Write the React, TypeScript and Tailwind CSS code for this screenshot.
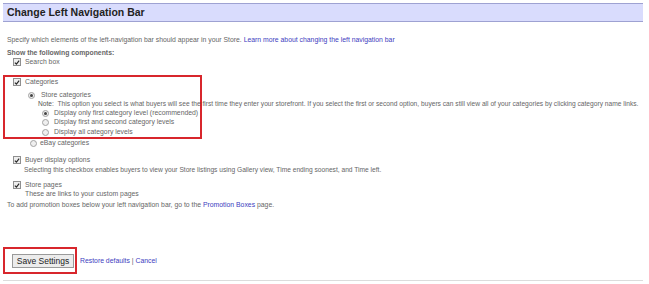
import React from 'react';

const font = { fontFamily: '"Liberation Sans", Arial, sans-serif' };

function Checkbox() {
  return (
    <span className="inline-flex items-center justify-center w-[8px] h-[8px] border border-[#8f8f8f] bg-[#eeeeee] shrink-0">
      <svg width="7" height="7" viewBox="0 0 7 7">
        <path d="M1 3.6 L2.8 5.4 L6 1.2" fill="none" stroke="#2b2b2b" strokeWidth="1.4" />
      </svg>
    </span>
  );
}

function Radio({ checked }: { checked?: boolean }) {
  return (
    <span className="inline-flex items-center justify-center w-[7px] h-[7px] rounded-full border border-[#a3a3a3] bg-[#efefef] shrink-0">
      {checked && <span className="w-[3px] h-[3px] rounded-full bg-[#444]" />}
    </span>
  );
}

function Row({ className, small, children }: { className?: string; small?: boolean; children: React.ReactNode }) {
  const size = small ? 'text-[6.65px]' : 'text-[6.85px]';
  return (
    <div className={`flex items-center h-[8px] leading-[8px] whitespace-nowrap ${size} text-[#666] ${className ?? ''}`}>
      {children}
    </div>
  );
}

export default function App() {
  return (
    <div className="w-[649px] h-[284px] bg-white pt-[3px] pl-[3px] overflow-hidden" style={font}>
      <div className="w-[640px] h-[19px] border-y border-[#9ea2d2] bg-[#d9dcfd] flex items-center pl-[4px]">
        <span className="text-[10.5px] font-bold text-[#222]">Change Left Navigation Bar</span>
      </div>

      <div className="flex flex-col">
        <Row className="mt-[14px] ml-[4px]">
          Specify which elements of the left-navigation bar should appear in your Store.&nbsp;
          <span className="text-[#4040c0]">Learn more about changing the left navigation bar</span>
        </Row>
        <Row className="mt-[5px] ml-[4px] font-bold text-[#333]">Show the following components:</Row>
        <Row className="mt-[1px] ml-[10px] gap-[4px]">
          <Checkbox />
          <span>Search box</span>
        </Row>

        <div className="mt-[9px] w-[199px] h-[64px] border-2 border-[#d8262c] flex flex-col">
          <Row className="mt-[1px] ml-[8px] gap-[4px]">
            <Checkbox />
            <span>Categories</span>
          </Row>
          <Row className="mt-[5px] ml-[23px] gap-[6px]">
            <Radio checked />
            <span>Store categories</span>
          </Row>
          <Row small className="mt-[1px] ml-[33px]">
            <span className="text-[#555]">Note:</span>&nbsp; This option you select is what buyers will see the first time they enter your storefront. If you select the first or second option, buyers can still view all of your categories by clicking category name links.
          </Row>
          <Row className="mt-[1px] ml-[37px] gap-[5px]">
            <Radio checked />
            <span>Display only first category level (recommended)</span>
          </Row>
          <Row className="mt-[1px] ml-[37px] gap-[5px]">
            <Radio />
            <span>Display first and second category levels</span>
          </Row>
          <Row className="mt-[2px] ml-[37px] gap-[5px]">
            <Radio />
            <span>Display all category levels</span>
          </Row>
        </div>

        <Row className="mt-0 ml-[27px] gap-[3px]">
          <Radio />
          <span>eBay categories</span>
        </Row>

        <Row className="mt-[9px] ml-[10px] gap-[4px]">
          <Checkbox />
          <span>Buyer display options</span>
        </Row>
        <Row small className="mt-[2px] ml-[21px]">
          Selecting this checkbox enables buyers to view your Store listings using Gallery view, Time ending soonest, and Time left.
        </Row>
        <Row className="mt-[7px] ml-[10px] gap-[4px]">
          <Checkbox />
          <span>Store pages</span>
        </Row>
        <Row className="mt-[1px] ml-[22px]">These are links to your custom pages</Row>
        <Row className="mt-[3px] ml-[4px]">
          To add promotion boxes below your left navigation bar, go to the&nbsp;
          <span className="text-[#4040c0]">Promotion Boxes</span>&nbsp;page.
        </Row>

        <div className="mt-[38px] flex items-center">
          <div className="w-[74px] h-[27px] border-2 border-[#d8262c] flex items-start pl-[7px] pt-[5px]">
            <button className="block w-[62px] h-[14px] border border-[#9a9a9a] bg-[#ececec] text-[8.5px] leading-[12px] text-[#222]">
              Save Settings
            </button>
          </div>
          <div className="ml-[3px] text-[6.85px] leading-[8px] text-[#4040c0] whitespace-nowrap">
            Restore defaults <span className="text-[#666]">|</span> Cancel
          </div>
        </div>

        <div className="mt-[6px] w-[640px] h-px bg-[#dcdcdc]" />
      </div>
    </div>
  );
}
